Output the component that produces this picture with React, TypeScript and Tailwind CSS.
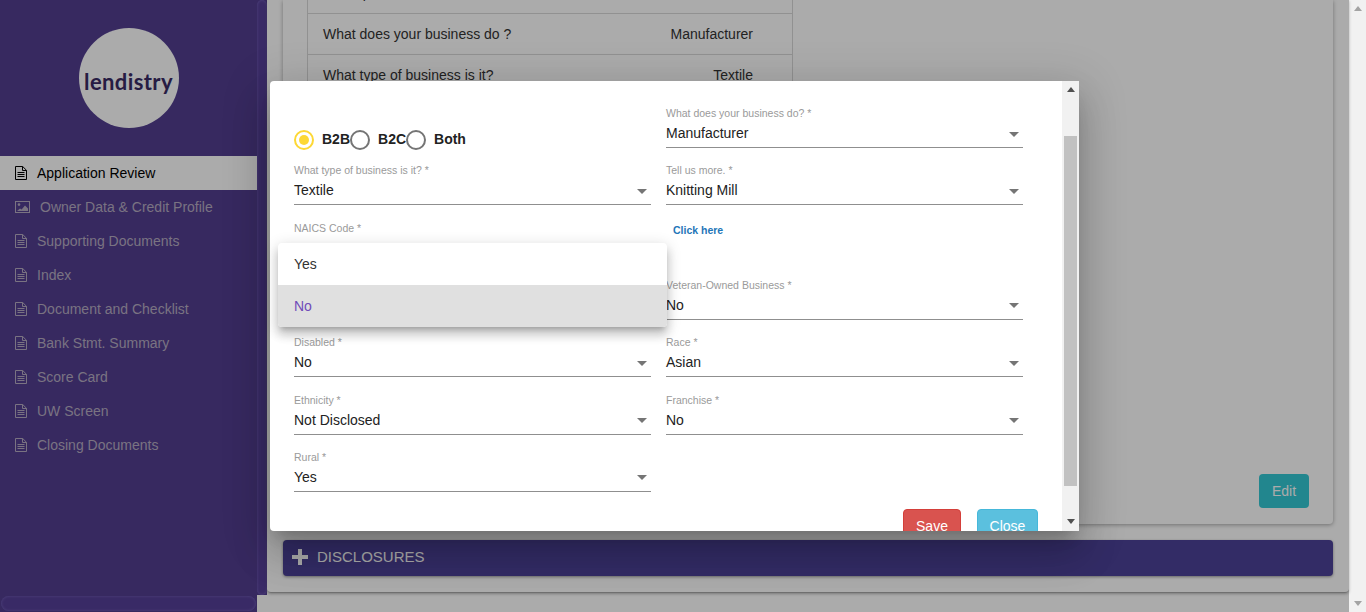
import React from "react";

const nav = [
  { t: "Owner Data & Credit Profile", img: true },
  { t: "Supporting Documents" },
  { t: "Index" },
  { t: "Document and Checklist" },
  { t: "Bank Stmt. Summary" },
  { t: "Score Card" },
  { t: "UW Screen" },
  { t: "Closing Documents" },
];

function DocIcon() {
  return (
    <svg viewBox="0 0 12 14" className="w-[12px] h-[14px] mr-[10px] shrink-0 fill-none stroke-current">
      <path d="M.5.5h7.2l3.8 3.8v9.2H.5z" strokeWidth="1" />
      <path d="M7.5.5v4h4" strokeWidth="1" />
      <path d="M2.5 6.5h7M2.5 8.5h7M2.5 10.5h7" strokeWidth="1" />
    </svg>
  );
}

function ImgIcon() {
  return (
    <svg viewBox="0 0 15 12" className="w-[15px] h-[12px] mr-[10px] shrink-0 fill-none stroke-current">
      <rect x=".5" y=".5" width="14" height="11" strokeWidth="1" />
      <circle cx="4" cy="3.6" r="1.3" fill="currentColor" stroke="none" />
      <path d="M2 10l3-2.6 1.6 1.2L10 4.6l3 3V10z" fill="currentColor" stroke="none" />
    </svg>
  );
}

function Arrow() {
  return (
    <svg viewBox="0 0 24 24" className="w-6 h-6 -mr-[3px] shrink-0 fill-[#757575]">
      <path d="M7 10l5 5 5-5z" />
    </svg>
  );
}

function Field({ label, value }: { label: string; value: string }) {
  return (
    <div className="flex flex-col h-[41px]">
      <div className="text-[10.5px] leading-[12px] h-[12px] text-[#9a9a9a]">{label}</div>
      <div className="flex items-center justify-between h-[29px] pt-px border-b border-[#8f8f8f] text-[14px] text-[#222]">
        <span>{value}</span>
        <Arrow />
      </div>
    </div>
  );
}

function Radio({ label, on }: { label: string; on?: boolean }) {
  return (
    <div className="flex items-center">
      <span className={"w-[20px] h-[20px] rounded-full border-2 flex items-center justify-center " + (on ? "border-[#fdd835]" : "border-[#757575]")}>
        {on && <span className="w-[10px] h-[10px] rounded-full bg-[#fdd835]" />}
      </span>
      <span className="ml-[8px] text-[14px] font-bold text-[#222]">{label}</span>
    </div>
  );
}

function TRow({ a, b }: { a: string; b?: string }) {
  return (
    <div className="flex items-center justify-between h-[41px] px-[15px] border-b border-[#d9d9d9]">
      <span>{a}</span>
      <span className="pr-[24px]">{b}</span>
    </div>
  );
}

export default function App() {
  return (
    <div className="flex w-[1366px] h-[612px] overflow-hidden bg-white font-['Liberation_Sans',Arial,sans-serif]">
      <div className="relative flex flex-1 min-w-0">
        {/* sidebar */}
        <div className="w-[267px] shrink-0 flex flex-col">
          <div className="flex h-[595px]">
            <div className="w-[257px] bg-[#523e90] flex flex-col">
              <div className="flex justify-center pt-[28px] pb-[28px]">
                <div className="w-[100px] h-[100px] rounded-full bg-white flex items-center justify-center pt-[8px]">
                  <span className="font-['Lato',sans-serif] font-bold text-[22px] tracking-[0.4px] text-[#392b64] leading-none">lendistry</span>
                </div>
              </div>
              <div className="flex items-center h-[34px] bg-white text-black text-[14px] pl-[15px]">
                <DocIcon />
                <span>Application Review</span>
              </div>
              {nav.map((n) => (
                <div key={n.t} className="flex items-center h-[34px] text-[#b6acc2] text-[14px] pl-[15px]">
                  {n.img ? <ImgIcon /> : <DocIcon />}
                  <span>{n.t}</span>
                </div>
              ))}
            </div>
            <div className="w-[10px] bg-[#523e90] flex">
              <div className="w-full rounded-[5px] bg-[#563f98] shadow-[inset_0_0_3px_#7a6abf]" />
            </div>
          </div>
          <div className="flex h-[17px]">
            <div className="w-[257px] bg-[#523e90] p-px">
              <div className="h-full rounded-full bg-[#563f98] shadow-[inset_0_0_3px_#7a6abf]" />
            </div>
          </div>
        </div>

        {/* main */}
        <div className="flex-1 min-w-0 flex flex-col">
          <div className="h-[593px] flex flex-col justify-end px-[16px] pb-[16px] gap-[16px] rounded-b-[4px] border-b border-[#a8a8a8] shadow-[0_1px_3px_rgba(0,0,0,0.3)]">
            <div className="h-[524px] shrink-0 rounded-b-[4px] overflow-hidden bg-white shadow-[0_1px_4px_rgba(0,0,0,0.35)] flex flex-col pl-[24px] pr-[24px] pb-[16px]">
              <div className="w-[486px] -mt-[27px] border-x border-[#d9d9d9] text-[14px] text-[#333]">
                <TRow a="Description" b="" />
                <TRow a="What does your business do ?" b="Manufacturer" />
                <TRow a="What type of business is it?" b="Textile" />
              </div>
              <button className="mt-auto self-end w-[50px] h-[34px] rounded-[4px] bg-[#33c8d4] text-white text-[14px]">Edit</button>
            </div>
            <div className="h-[36px] shrink-0 rounded-[4px] bg-[#4c4298] shadow-[0_1px_3px_rgba(0,0,0,0.4)] flex items-center pl-[9px] pb-[2px] text-white text-[15px]">
              <svg viewBox="0 0 16 16" className="w-[16px] h-[16px] mr-[9px] fill-current"><path d="M6 0h4v6h6v4h-6v6H6v-6H0V6h6z" /></svg>
              <span>DISCLOSURES</span>
            </div>
          </div>
        </div>

        {/* backdrop */}
        <div className="absolute inset-0 bg-black/33" />

        {/* modal */}
        <div className="absolute left-[270px] top-[81px] w-[809px] h-[450px] flex bg-white rounded-l-[4px] overflow-hidden shadow-[0_11px_15px_-7px_rgba(0,0,0,0.2),0_24px_38px_3px_rgba(0,0,0,0.14),0_9px_46px_8px_rgba(0,0,0,0.12)]">
          <div className="flex-1 min-w-0 pl-[24px] pt-[26px] pr-[24px]">
            <div className="grid grid-cols-[357px_357px] gap-x-[15px] auto-rows-[41px] gap-y-[16.33px]">
              <div className="flex items-start pt-[22px]">
                <Radio label="B2B" on />
                <Radio label="B2C" />
                <Radio label="Both" />
              </div>
              <Field label="What does your business do? *" value="Manufacturer" />
              <Field label="What type of business is it? *" value="Textile" />
              <Field label="Tell us more. *" value="Knitting Mill" />
              <Field label="NAICS Code *" value="313240" />
              <div className="pl-[7px] text-[10.5px] leading-[12px] pt-[2px] font-bold text-[#1f76b8]">Click here</div>
              <Field label="Women-Owned Business *" value="No" />
              <Field label="Veteran-Owned Business *" value="No" />
              <Field label="Disabled *" value="No" />
              <Field label="Race *" value="Asian" />
              <Field label="Ethnicity *" value="Not Disclosed" />
              <Field label="Franchise *" value="No" />
              <Field label="Rural *" value="Yes" />
            </div>
            <div className="flex justify-end gap-[16px] mt-[17px]">
              <button className="h-[36px] w-[58px] rounded-[4px] bg-[#d9534f] border border-[#d43f3a] text-white text-[14px]">Save</button>
              <button className="h-[36px] w-[61px] rounded-[4px] bg-[#5bc0de] border border-[#46b8da] text-white text-[14px]">Close</button>
            </div>
          </div>
          <div className="w-[17px] shrink-0 bg-[#f1f1f1] flex flex-col items-center">
            <div className="h-[55px] w-full flex justify-center pt-[6px]">
              <svg viewBox="0 0 8 5" className="w-[8px] h-[5px] fill-[#505050]"><path d="M4 0l4 5H0z" /></svg>
            </div>
            <div className="h-[350px] w-[13px] bg-[#c1c1c1]" />
            <div className="flex-1 w-full flex justify-center items-end pb-[7px]">
              <svg viewBox="0 0 8 5" className="w-[8px] h-[5px] fill-[#505050]"><path d="M0 0h8L4 5z" /></svg>
            </div>
          </div>
        </div>

        {/* open select menu */}
        <div className="absolute left-[278px] top-[243px] w-[389px] rounded-[4px] bg-white text-[14px] shadow-[0_5px_5px_-3px_rgba(0,0,0,0.2),0_8px_10px_1px_rgba(0,0,0,0.14),0_3px_14px_2px_rgba(0,0,0,0.12)] overflow-hidden">
          <div className="h-[42px] flex items-center pl-[16px] text-[#333]">Yes</div>
          <div className="h-[42px] flex items-center pl-[16px] bg-[#e0e0e0] text-[#6f4bb8]">No</div>
        </div>
      </div>

      {/* page scrollbar */}
      <div className="w-[17px] shrink-0 bg-[#f1f1f1] flex flex-col justify-between items-center pt-[6px] pb-[6px]">
        <svg viewBox="0 0 8 5" className="w-[8px] h-[5px] fill-[#a3a3a3]"><path d="M4 0l4 5H0z" /></svg>
        <svg viewBox="0 0 8 5" className="w-[8px] h-[5px] fill-[#a3a3a3]"><path d="M0 0h8L4 5z" /></svg>
      </div>
    </div>
  );
}
